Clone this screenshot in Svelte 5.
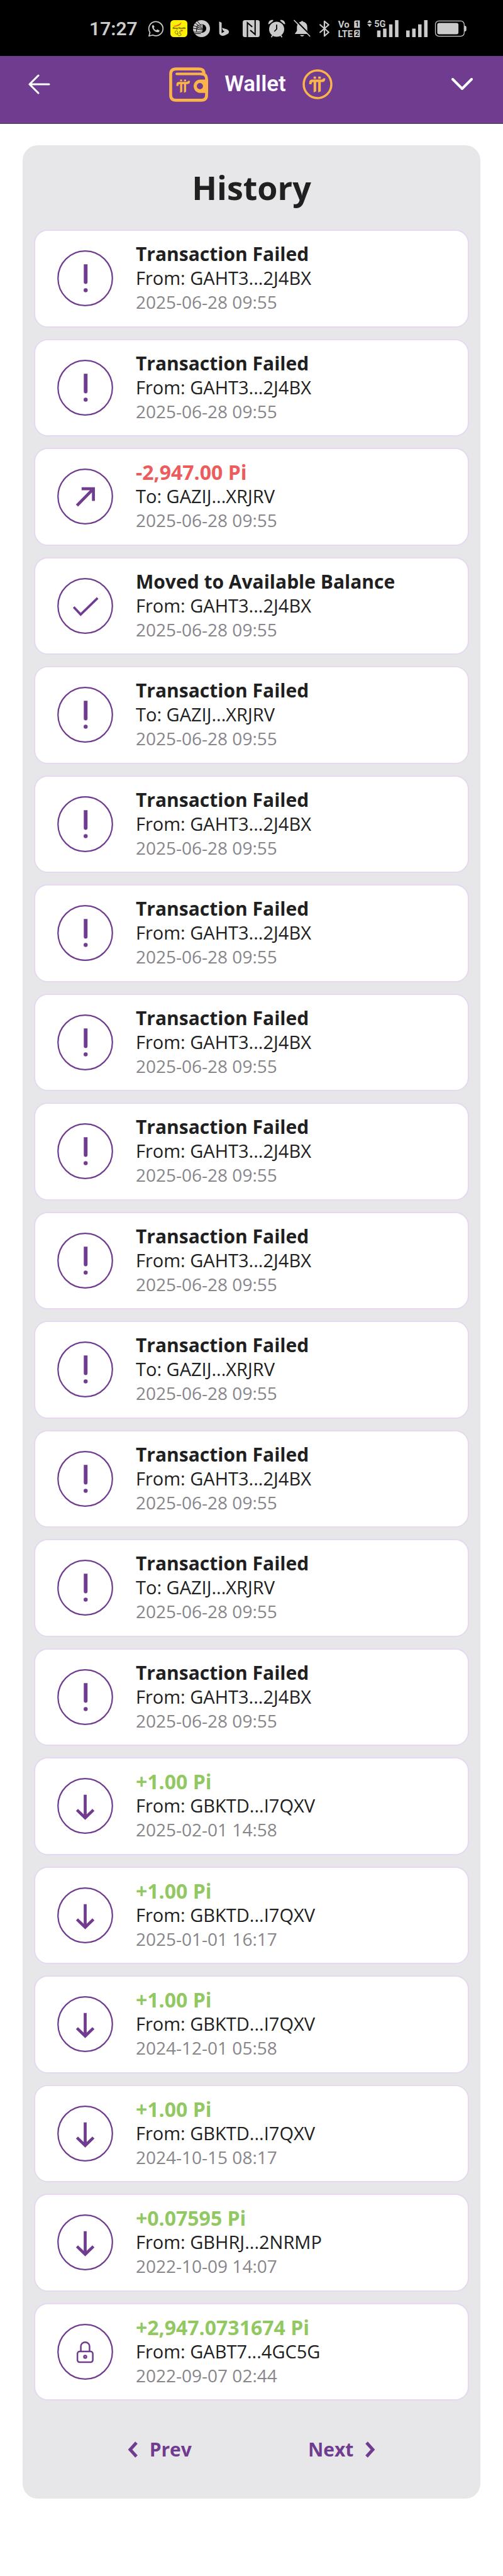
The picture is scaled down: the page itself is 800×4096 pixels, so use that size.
<script>
    const failed = 'Transaction Failed';
    const mine = 'From: GAHT3...2J4BX';
    const other = 'To: GAZIJ...XRJRV';
    const node = 'From: GBKTD...I7QXV';
    const june = '2025-06-28 09:55';

    const transactions = [
        { icon: 'alert', title: failed, party: mine, date: june },
        { icon: 'alert', title: failed, party: mine, date: june },
        { icon: 'sent', title: '-2,947.00 Pi', tone: 'out', party: other, date: june },
        { icon: 'check', title: 'Moved to Available Balance', party: mine, date: june },
        { icon: 'alert', title: failed, party: other, date: june },
        { icon: 'alert', title: failed, party: mine, date: june },
        { icon: 'alert', title: failed, party: mine, date: june },
        { icon: 'alert', title: failed, party: mine, date: june },
        { icon: 'alert', title: failed, party: mine, date: june },
        { icon: 'alert', title: failed, party: mine, date: june },
        { icon: 'alert', title: failed, party: other, date: june },
        { icon: 'alert', title: failed, party: mine, date: june },
        { icon: 'alert', title: failed, party: other, date: june },
        { icon: 'alert', title: failed, party: mine, date: june },
        { icon: 'received', title: '+1.00 Pi', tone: 'in', party: node, date: '2025-02-01 14:58' },
        { icon: 'received', title: '+1.00 Pi', tone: 'in', party: node, date: '2025-01-01 16:17' },
        { icon: 'received', title: '+1.00 Pi', tone: 'in', party: node, date: '2024-12-01 05:58' },
        { icon: 'received', title: '+1.00 Pi', tone: 'in', party: node, date: '2024-10-15 08:17' },
        { icon: 'received', title: '+0.07595 Pi', tone: 'in', party: 'From: GBHRJ...2NRMP', date: '2022-10-09 14:07' },
        { icon: 'locked', title: '+2,947.0731674 Pi', tone: 'in', party: 'From: GABT7...4GC5G', date: '2022-09-07 02:44' }
    ];
</script>

{#snippet pi()}
    <path d="M24 0h13v12h-13zM49 0h14v12h-14z" />
    <path d="M0 42V33Q0 16 17 16H64Q75 16 75 9H88Q88 30 70 30H63V80L49 86V30H38V80L24 86V30H20Q13 30 13 42Z" />
{/snippet}

<div class="page">
    <div class="status-bar">
        <span class="time">17:27</span>
        <div class="notifications">
            <svg class="status-icon" viewBox="43 41 108 108">
                <path d="M57 120A45 45 0 1 1 75 136L51 142Z" fill="none" stroke="#cbcbcb" stroke-width="7" stroke-linejoin="round" />
                <path d="M79 72c-4-2-9 3-9 9 1 17 19 37 37 37 7 0 12-6 11-11l-14-7-8 6c-7-3-13-10-15-16l5-6z" fill="#cbcbcb" />
            </svg>
            <svg class="status-icon" viewBox="186 41 108 108">
                <rect x="186" y="41" width="108" height="108" rx="22" fill="#fdf004" />
                <path d="M207 79Q245 70 257 53Q252 76 230 79L207 83Z" fill="#ef5a28" />
                <text x="200" y="97" font-size="16" font-weight="700" fill="#3a3a10">Sing Health</text>
                <path d="M258 115l-8-8q-1-7 5-6l4 3q6-5 8 1z" fill="#f0503c" />
                <path d="M219 108q-10 13 4 22l8-2 3-9-10-14M232 126q1 18 15 14 12-4 5-13-7-8-12 0" fill="none" stroke="#4b4b12" stroke-width="3" />
                <circle cx="247" cy="115" r="4" fill="#33731e" />
            </svg>
            <svg class="status-icon" viewBox="330 41 108 108">
                <circle cx="384" cy="95" r="54" fill="#cbcbcb" />
                <circle cx="387" cy="94" r="27" fill="#000" />
                <path d="M391 70Q362 68 362 94L360 120H384L391 108Z" fill="#cbcbcb" />
                <path d="M333 75L391 98M341 58L388 91M357 47L384 80M329 92L390 104M330 117H389M338 127H380M361 70Q351 84 352 113" fill="none" stroke="#000" stroke-width="4" />
            </svg>
            <svg class="status-icon" viewBox="476 41 108 108">
                <path d="M498 50L514 57V124L532 113L522 106L516 90L549 100Q568 111 556 127L532 139Q510 146 499 127Z" fill="#cbcbcb" />
            </svg>
        </div>
        <div class="indicators">
            <svg class="status-icon" viewBox="48 39 108 108">
                <rect x="48" y="39" width="108" height="108" rx="14" fill="#cbcbcb" />
                <path d="M78 147V56L109 82M127 39V130L96 103" fill="none" stroke="#000" stroke-width="8" />
            </svg>
            <svg class="status-icon alarm" viewBox="212 39 120 108">
                <circle cx="272" cy="97" r="48" fill="#cbcbcb" />
                <path d="M218 64Q220 38 248 37L251 43L224 65ZM327 64Q324 38 297 37L294 43L320 65Z" fill="#cbcbcb" />
                <path d="M247 134L238 148M297 134L306 148" stroke="#cbcbcb" stroke-width="7" />
                <path d="M272 70V96L259 109" fill="none" stroke="#000" stroke-width="7" stroke-linecap="round" />
            </svg>
            <svg class="status-icon" viewBox="372 39 108 108">
                <path d="M379 127L393 107V80Q396 52 421 48Q426 38 431 48Q460 54 459 86V107L474 127ZM412 134H440Q426 152 412 134Z" fill="#cbcbcb" />
                <path d="M382 37L484 140" stroke="#000" stroke-width="9" />
                <path d="M376 41L475 141" stroke="#cbcbcb" stroke-width="7" stroke-linecap="round" />
            </svg>
            <svg class="status-icon bluetooth" viewBox="528 39 80 108">
                <path d="M541 69L595 116L568 140V46L595 69L541 116" fill="none" stroke="#cbcbcb" stroke-width="9" stroke-linecap="round" stroke-linejoin="round" />
            </svg>
            <svg class="status-icon volte" viewBox="31 39 136 108">
                <g font-size="60" font-weight="700" fill="#cbcbcb">
                    <text x="30" y="86">Vo</text>
                    <text x="29" y="147" font-size="58">LTE</text>
                </g>
                <path d="M138 41H168V88H132V47ZM138 101H168V147H132V107Z" fill="#cbcbcb" />
                <g font-size="44" font-weight="700" fill="#000">
                    <text x="138" y="80">1</text>
                    <text x="138" y="140">2</text>
                </g>
            </svg>
            <svg class="status-icon signal-5g" viewBox="213 39 200 108">
                <path d="M213 56L228 38L243 56ZM213 64H243L228 82Z" fill="#cbcbcb" />
                <text x="258" y="83" font-size="58" font-weight="700" fill="#cbcbcb">5G</text>
                <path d="M276 105h22v42h-22zM314 93h22v54h-22zM352 66h22v81h-22zM390 39h22v108h-22z" fill="#cbcbcb" />
            </svg>
            <svg class="status-icon signal" viewBox="456 39 136 108">
                <path d="M456 105h22v42h-22zM494 93h22v54h-22zM532 66h22v81h-22zM570 39h22v108h-22z" fill="#cbcbcb" />
            </svg>
            <svg class="status-icon battery" viewBox="642 42 202 108">
                <rect x="644" y="47" width="185" height="98" rx="22" fill="none" stroke="#cbcbcb" stroke-width="5" />
                <rect x="656" y="60" width="136" height="72" rx="12" fill="#cbcbcb" />
                <path d="M831 77Q843 79 843 86V106Q843 113 831 115Z" fill="#cbcbcb" />
            </svg>
        </div>
    </div>

    <header>
        <button class="icon-button" aria-label="Back">
            <svg width="36" height="32" viewBox="0 0 36 32">
                <path d="M34 16H3M17 2L3 16L17 30" fill="none" stroke="#fff" stroke-width="3" stroke-linecap="round" stroke-linejoin="round" />
            </svg>
        </button>
        <div class="brand">
            <svg width="62" height="55" viewBox="186 100 252 222" fill="#fbb44a">
                <g fill="none" stroke="#fbb44a" stroke-linecap="round">
                    <path d="M412 142Q412 110 380 110H230Q196 110 196 144V278Q196 312 230 312H394Q428 312 428 278V176Q428 143 398 143" stroke-width="19" />
                    <path d="M235 142H402" stroke-width="16" />
                </g>
                <path fill-rule="evenodd" d="M438 178H388A43 43 0 0 0 388 265H438ZM385 201A20 20 0 1 1 385 241A20 20 0 1 1 385 201Z" />
                <g transform="translate(233 178)">{@render pi()}</g>
            </svg>
            <span class="brand-name">Wallet</span>
            <svg width="48" height="48" viewBox="1032 114 192 192" fill="#fbb44a">
                <circle cx="1128" cy="210" r="88" fill="none" stroke="#fbb44a" stroke-width="14" />
                <g transform="translate(1075 161) scale(1.17)">{@render pi()}</g>
            </svg>
        </div>
        <button class="icon-button" aria-label="More">
            <svg width="34" height="20" viewBox="0 0 34 20">
                <path d="M2 2L17 17L32 2" fill="none" stroke="#fff" stroke-width="4" stroke-linecap="round" stroke-linejoin="round" />
            </svg>
        </button>
    </header>

    <main>
        <h1>History</h1>
        <ul>
            {#each transactions as tx}
                <li>
                    <svg class="tx-icon" viewBox="0 0 360 360">
                        <circle cx="180" cy="180" r="175" stroke-width="9" />
                        {#if tx.icon === 'alert'}
                            <path class="solid" d="M171 90H195V204A12 12 0 0 1 171 204Z" />
                            <circle class="solid" cx="183" cy="257" r="13" />
                        {:else if tx.icon === 'sent'}
                            <path d="M127 238L232 131M157 130H233V208" stroke-width="19" />
                        {:else if tx.icon === 'check'}
                            <path d="M106 187L151 235L260 129" stroke-width="15" />
                        {:else if tx.icon === 'received'}
                            <path d="M180 108V256M127 206L180 257L233 206" stroke-width="19" />
                        {:else}
                            <rect x="130" y="178" width="99" height="69" rx="14" stroke-width="10" />
                            <path d="M152 176V146A28 28 0 0 1 208 146V176" stroke-width="10" />
                            <circle cx="180" cy="212" r="8" stroke-width="10" />
                        {/if}
                    </svg>
                    <div class="details">
                        <p class="title {tx.tone ?? ''}">{tx.title}</p>
                        <p class="party">{tx.party}</p>
                        <p class="date">{tx.date}</p>
                    </div>
                </li>
            {/each}
        </ul>
        <nav>
            <button class="pager">
                <svg width="16" height="26" viewBox="0 0 16 26"><path d="M14 2L4 13L14 24" /></svg>
                Prev
            </button>
            <button class="pager">
                Next
                <svg width="16" height="26" viewBox="0 0 16 26"><path d="M2 2L12 13L2 24" /></svg>
            </button>
        </nav>
    </main>
</div>

<style>
:global(body) {
    margin: 0;
    background: #fff;
}

.page {
    display: flex;
    flex-direction: column;
    box-sizing: border-box;
    min-height: 100vh;
    padding-bottom: 123px;
    font-family: "Open Sans", "Noto Sans", sans-serif;
    color: #202020;
}

button {
    padding: 0;
    border: 0;
    background: none;
    font: inherit;
    cursor: pointer;
}

svg {
    display: block;
    flex: none;
}

/* Phone status bar */
.status-bar {
    display: flex;
    align-items: center;
    height: 89px;
    padding: 2px 58px 0 142px;
    box-sizing: border-box;
    background: #000;
    color: #cbcbcb;
    font-family: Roboto, sans-serif;
}

.time {
    font-size: 30px;
    font-weight: 600;
    line-height: 40px;
}

.notifications {
    display: flex;
    gap: 9px;
    margin-left: 16px;
}

.indicators {
    display: flex;
    gap: 12px;
    margin-left: auto;
}

.status-icon {
    width: 27px;
    height: 27px;
    overflow: visible;
}

.alarm {
    width: 30px;
}

.bluetooth {
    width: 20px;
}

.volte, .signal {
    width: 34px;
}

.signal-5g, .battery {
    width: 50px;
}

/* App header */
header {
    display: flex;
    align-items: center;
    justify-content: space-between;
    height: 108px;
    padding: 0 48px 17px 44px;
    box-sizing: border-box;
    border-bottom: 1px solid #4b3a58;
    background: #703c90;
}

.icon-button {
    display: flex;
}

.brand {
    display: flex;
    align-items: center;
    gap: 26px;
}

.brand-name {
    color: #fcf9ff;
    font-family: Roboto, sans-serif;
    font-size: 35px;
    font-weight: 600;
    line-height: 44px;
}

/* History panel */
main {
    display: flex;
    flex: 1;
    flex-direction: column;
    margin: 34px 36px 0;
    padding: 0 18px;
    border-radius: 24px;
    background: #e7e7e9;
}

h1 {
    margin: 0;
    padding: 33px 0;
    font-size: 52px;
    font-weight: 700;
    line-height: 68px;
    text-align: center;
}

ul {
    display: flex;
    flex: 1;
    flex-direction: column;
    gap: 18px;
    margin: 0;
    padding: 0;
    list-style: none;
}

li {
    display: flex;
    flex: 1;
    align-items: center;
    gap: 36px;
    padding: 16px 35px;
    border: 2px solid #e5d8f0;
    border-radius: 22px;
    background: #fff;
}

.tx-icon {
    width: 89px;
    height: 89px;
    fill: none;
    stroke: #703c90;
}

.tx-icon .solid {
    fill: #703c90;
    stroke: none;
}

p {
    margin: 0;
}

.title {
    font-size: 30px;
    font-weight: 700;
    line-height: 38px;
}

.title.out, .title.in {
    font-size: 32px;
}

.title.out {
    color: #ed5c5c;
}

.title.in {
    color: #92c862;
}

.party {
    font-size: 29px;
    line-height: 38px;
}

.date {
    color: #88858b;
    font-size: 28px;
    line-height: 39px;
}

nav {
    display: flex;
    justify-content: center;
    gap: 185px;
    padding: 58px 0;
}

.pager {
    display: flex;
    align-items: center;
    gap: 19px;
    color: #703c90;
    font-size: 30px;
    font-weight: 700;
    line-height: 40px;
}

.pager path {
    fill: none;
    stroke: #703c90;
    stroke-width: 5;
}
</style>
